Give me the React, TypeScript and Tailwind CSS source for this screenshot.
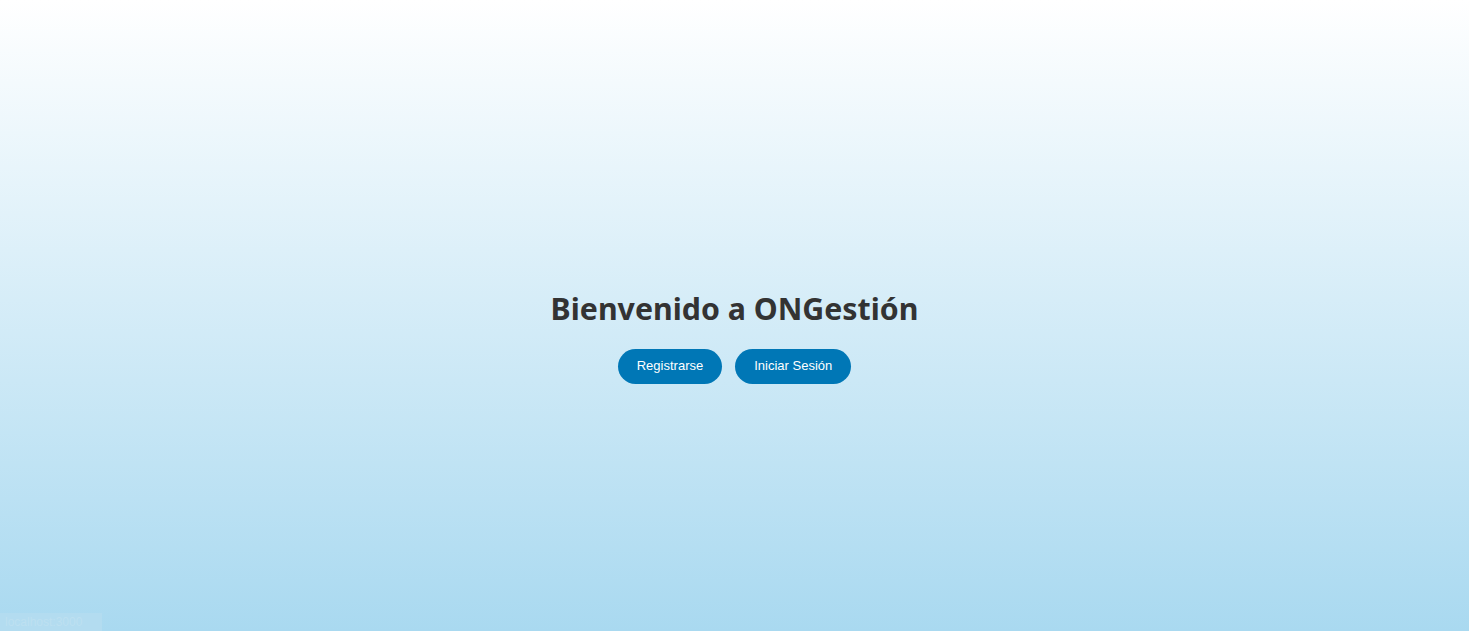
import React from "react";

export default function App() {
  return (
    <div className="relative h-[631px] w-full overflow-hidden bg-[linear-gradient(to_bottom,#ffffff_0%,#a9d9f0_100%)]">
      <div className="flex h-full flex-col items-center justify-center pt-[42px]">
        <h1 className="m-0 text-[30.3px] font-bold leading-[38px] text-[#333333] [font-family:'Noto_Sans','Open_Sans',sans-serif]">
          Bienvenido a ONGestión
        </h1>
        <div className="mt-[21px] flex gap-[13px]">
          <button className="h-[35px] rounded-full bg-[#0077b6] px-[19px] text-[13px] text-white [font-family:'Liberation_Sans',Arial,sans-serif]">
            Registrarse
          </button>
          <button className="h-[35px] rounded-full bg-[#0077b6] px-[19px] text-[13px] text-white [font-family:'Liberation_Sans',Arial,sans-serif]">
            Iniciar Sesión
          </button>
        </div>
      </div>
      <div className="absolute bottom-0 left-0 h-[18px] w-[102px] bg-[#b3dcf0] px-[5px] text-[12px] leading-[18px] text-[#bde0f1] [font-family:'Liberation_Sans',Arial,sans-serif]">
        localhost:3000
      </div>
    </div>
  );
}
